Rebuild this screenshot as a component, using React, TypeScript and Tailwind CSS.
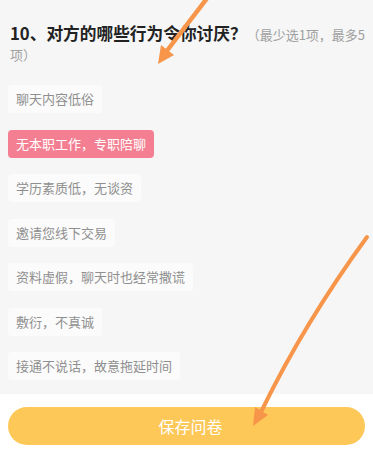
const options = [
  { label: "聊天内容低俗", selected: false },
  { label: "无本职工作，专职陪聊", selected: true },
  { label: "学历素质低，无谈资", selected: false },
  { label: "邀请您线下交易", selected: false },
  { label: "资料虚假，聊天时也经常撒谎", selected: false },
  { label: "敷衍，不真诚", selected: false },
  { label: "接通不说话，故意拖延时间", selected: false },
];

export default function App() {
  return (
    <div
      className="relative w-[373px] h-[450px] overflow-hidden bg-[#f6f6f6] flex flex-col"
      style={{ fontFamily: '"Noto Sans CJK SC", "Noto Sans", sans-serif' }}
    >
      <div className="flex-1 pl-[10px] pr-[4px] pt-[24px]">
        <p className="leading-[19px]">
          <span className="text-[16.7px] font-bold text-[#222]">10、对方的哪些行为令你讨厌？</span>
          <span className="text-[13px] text-[#a0a0a0]">（最少选1项，最多5项）</span>
        </p>

        <div className="mt-[21px] -ml-[2px] flex flex-col items-start gap-[16.5px]">
          {options.map((o) => (
            <div
              key={o.label}
              className={
                o.selected
                  ? "h-[28px] px-[8px] flex items-center rounded-[4px] bg-[#f57f92] text-white text-[13px]"
                  : "h-[28px] px-[8px] flex items-center rounded-[4px] bg-[#fbfbfb] text-[#8f8f8f] text-[13px]"
              }
            >
              {o.label}
            </div>
          ))}
        </div>
      </div>

      <div className="h-[56px] bg-white px-[8px] pt-[13px]">
        <button className="w-full h-[38px] rounded-full bg-[#fdc857] text-white text-[16px] flex items-center justify-center pl-[8px]">
          保存问卷
        </button>
      </div>

      {/* annotation arrows */}
      <svg className="absolute inset-0 pointer-events-none" width="373" height="450" viewBox="0 0 373 450">
        <line x1="208" y1="-3" x2="166" y2="52" stroke="#f7964a" strokeWidth="4.5" strokeLinecap="round" />
        <polygon points="158,64 174,55 161,45" fill="#f7964a" />
        <path d="M367 237 Q305 322 262 410" fill="none" stroke="#f7964a" strokeWidth="4" strokeLinecap="round" />
        <polygon points="253,426 268,415 255,407" fill="#f7964a" />
      </svg>
    </div>
  );
}
